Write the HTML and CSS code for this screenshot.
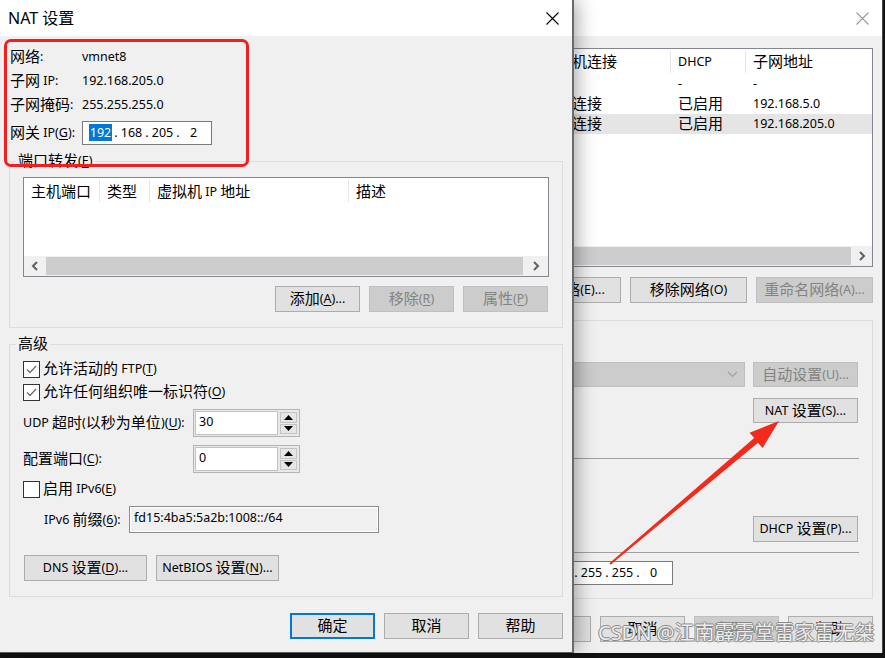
FILE: index.html
```html
<!DOCTYPE html>
<html lang="zh-CN">
<head>
  <meta charset="UTF-8">
  <meta name="viewport" content="width=device-width, initial-scale=1.0">
  <title>NAT 设置</title>
  <link rel="stylesheet" href="styles.css">
</head>
<body>

<div class="desktop">

  <!-- Virtual network editor (behind the dialog) -->
  <div class="window editor">
    <div class="titlebar">
      <span class="title">虚拟网络编辑器</span>
      <svg class="close inactive" width="13" height="13" viewBox="0 0 13 13"><path d="M0.5 0.5L12.5 12.5M12.5 0.5L0.5 12.5"/></svg>
    </div>

    <div class="editor-body">
      <div class="listview net-list">
        <div class="lv-row lv-head">
          <span><span class="cn">名称</span></span>
          <span><span class="cn">类型</span></span>
          <span><span class="cn">外部连接</span></span>
          <span><span class="cn">主机连接</span></span>
          <span>DHCP</span>
          <span><span class="cn">子网地址</span></span>
        </div>
        <div class="lv-row">
          <span>VMnet0</span>
          <span><span class="cn">桥接模式</span></span>
          <span><span class="cn">自动桥接</span></span>
          <span>-</span>
          <span>-</span>
          <span>-</span>
        </div>
        <div class="lv-row">
          <span>VMnet1</span>
          <span><span class="cn">仅主机</span></span>
          <span>-</span>
          <span><span class="cn">已连接</span></span>
          <span><span class="cn">已启用</span></span>
          <span>192.168.5.0</span>
        </div>
        <div class="lv-row selected">
          <span>VMnet8</span>
          <span>NAT <span class="cn">模式</span></span>
          <span>NAT <span class="cn">模式</span></span>
          <span><span class="cn">已连接</span></span>
          <span><span class="cn">已启用</span></span>
          <span>192.168.205.0</span>
        </div>
        <div class="lv-fill"></div>
        <div class="hscroll editor-scroll">
          <span class="thumb"></span>
          <span class="sb-btn">
            <svg width="8" height="10" viewBox="0 0 8 10"><path d="M2 1L6 5L2 9"/></svg>
          </span>
        </div>
      </div>

      <div class="btn-row list-btns">
        <button class="btn wide"><span class="cn">添加网络</span>(E)...</button>
        <button class="btn wide"><span class="cn">移除网络</span>(O)</button>
        <button class="btn wide" disabled><span class="cn">重命名网络</span>(A)...</button>
      </div>

      <div class="info-box">
        <div class="info-row row-a">
          <div class="combo">
            <svg width="11" height="7" viewBox="0 0 11 7"><path d="M1 1L5.5 5.5L10 1"/></svg>
          </div>
          <button class="btn side" disabled><span class="cn">自动设置</span>(U)...</button>
        </div>
        <div class="info-row row-b">
          <button class="btn side">NAT <span class="cn">设置</span>(S)...</button>
        </div>
        <div class="sep sep-1"></div>
        <div class="info-row row-c">
          <button class="btn side tall">DHCP <span class="cn">设置</span>(P)...</button>
        </div>
        <div class="sep sep-2"></div>
        <div class="info-row row-d">
          <div class="ipbox mask-box">
            <span class="oct">255</span><span class="dot">.</span><span class="oct">255</span><span class="dot">.</span><span class="oct">255</span><span class="dot">.</span><span class="oct">0</span>
          </div>
        </div>
      </div>

      <div class="btn-row editor-footer">
        <button class="btn"><span class="cn">确定</span></button>
        <button class="btn"><span class="cn">取消</span></button>
        <button class="btn" disabled><span class="cn">应用</span>(A)</button>
        <button class="btn"><span class="cn">帮助</span></button>
      </div>
    </div>
  </div>

  <!-- NAT settings dialog -->
  <div class="window dialog">
    <div class="titlebar">
      <span class="title">NAT 设置</span>
      <svg class="close" width="13" height="13" viewBox="0 0 13 13"><path d="M0.5 0.5L12.5 12.5M12.5 0.5L0.5 12.5"/></svg>
    </div>

    <div class="dialog-body">
      <div class="net-info">
        <span><span class="cn">网络</span>:</span>
        <span>vmnet8</span>
        <span><span class="cn">子网</span> IP:</span>
        <span>192.168.205.0</span>
        <span><span class="cn">子网掩码</span>:</span>
        <span>255.255.255.0</span>
        <span class="gw"><span class="cn">网关</span> IP(<u>G</u>):</span>
        <div class="ipbox gw">
          <span class="oct"><span class="sel">192</span></span><span class="dot">.</span><span class="oct">168</span><span class="dot">.</span><span class="oct">205</span><span class="dot">.</span><span class="oct">2</span>
        </div>
      </div>

      <fieldset class="group">
        <legend><span class="cn">端口转发</span>(<u>E</u>)</legend>
        <div class="group-inner">
          <div class="listview port-list">
            <div class="lv-row lv-head">
              <span><span class="cn">主机端口</span></span>
              <span><span class="cn">类型</span></span>
              <span><span class="cn">虚拟机</span> IP <span class="cn">地址</span></span>
              <span><span class="cn">描述</span></span>
            </div>
            <div class="lv-fill"></div>
            <div class="hscroll port-scroll">
              <span class="sb-btn">
                <svg width="8" height="10" viewBox="0 0 8 10"><path d="M6 1L2 5L6 9"/></svg>
              </span>
              <span class="thumb"></span>
              <span class="sb-btn">
                <svg width="8" height="10" viewBox="0 0 8 10"><path d="M2 1L6 5L2 9"/></svg>
              </span>
            </div>
          </div>
          <div class="btn-row port-btns">
            <button class="btn"><span class="cn">添加</span>(<u>A</u>)...</button>
            <button class="btn" disabled><span class="cn">移除</span>(<u>R</u>)</button>
            <button class="btn" disabled><span class="cn">属性</span>(<u>P</u>)</button>
          </div>
        </div>
      </fieldset>

      <fieldset class="group adv-group">
        <legend><span class="cn">高级</span></legend>
        <div class="group-inner">
          <label class="check-row">
            <span class="checkbox"><svg width="15" height="15" viewBox="0 0 15 15"><path d="M3 7.5L6 10.5L12 4"/></svg></span>
            <span><span class="cn">允许活动的</span> FTP(<u>T</u>)</span>
          </label>
          <label class="check-row cb-2">
            <span class="checkbox"><svg width="15" height="15" viewBox="0 0 15 15"><path d="M3 7.5L6 10.5L12 4"/></svg></span>
            <span><span class="cn">允许任何组织唯一标识符</span>(<u>O</u>)</span>
          </label>

          <div class="spin-row">
            <span class="field-label">UDP <span class="cn">超时</span>(<span class="cn">以秒为单位</span>)(<u>U</u>):</span>
            <div class="spin">
              <span class="spin-val">30</span>
              <span class="spin-btns">
                <span class="spin-btn"><svg width="9" height="5" viewBox="0 0 9 5"><path d="M0 5L4.5 0L9 5Z"/></svg></span>
                <span class="spin-btn"><svg width="9" height="5" viewBox="0 0 9 5"><path d="M0 0L4.5 5L9 0Z"/></svg></span>
              </span>
            </div>
          </div>
          <div class="spin-row">
            <span class="field-label"><span class="cn">配置端口</span>(<u>C</u>):</span>
            <div class="spin">
              <span class="spin-val">0</span>
              <span class="spin-btns">
                <span class="spin-btn"><svg width="9" height="5" viewBox="0 0 9 5"><path d="M0 5L4.5 0L9 5Z"/></svg></span>
                <span class="spin-btn"><svg width="9" height="5" viewBox="0 0 9 5"><path d="M0 0L4.5 5L9 0Z"/></svg></span>
              </span>
            </div>
          </div>

          <label class="check-row cb-3">
            <span class="checkbox"></span>
            <span><span class="cn">启用</span> IPv6(<u>E</u>)</span>
          </label>

          <div class="prefix-row">
            <span class="prefix-label">IPv6 <span class="cn">前缀</span>(<u>6</u>):</span>
            <div class="ro-box">fd15:4ba5:5a2b:1008::/64</div>
          </div>

          <div class="btn-row adv-btns">
            <button class="btn wide-2">DNS <span class="cn">设置</span>(<u>D</u>)...</button>
            <button class="btn wide-2">NetBIOS <span class="cn">设置</span>(<u>N</u>)...</button>
          </div>
        </div>
      </fieldset>

      <div class="btn-row dialog-footer">
        <button class="btn default"><span class="cn">确定</span></button>
        <button class="btn"><span class="cn">取消</span></button>
        <button class="btn"><span class="cn">帮助</span></button>
      </div>
    </div>
  </div>

  <!-- annotations drawn on top of the screenshot -->
  <div class="mark-box"></div>

  <svg class="arrow" width="885" height="658" viewBox="0 0 885 658">
    <polygon points="609.4,563.2 754.2,438.1 749.6,432.8 779,421 762.6,448 758,442.7 610.6,564.8"/>
  </svg>

  <div class="watermark">CSDN @江南霹雳堂雷家雷无桀</div>

</div>

</body>
</html>
```

FILE: styles.css
```css
/* Global */
* {
  box-sizing: border-box;
}

body {
  margin: 0;
  background-color: #111;
  color: #000;
  font-family: "Noto Sans", "Noto Sans CJK SC", sans-serif;
  font-size: 12.5px;
  line-height: 20px;
}

.cn {
  font-family: "Noto Sans CJK SC", sans-serif;
  font-size: 15px;
  line-height: 1;
  vertical-align: -1px;
}

u {
  text-decoration-thickness: 1px;
  text-underline-offset: 2px;
}

.desktop {
  position: relative;
  width: 885px;
  height: 658px;
  overflow: hidden;
}

/* Windows */
.window {
  position: absolute;
  top: 0;
  height: 653px;
  background-color: #f0f0f0;
}

.editor {
  left: 300px;
  width: 583px;
  border-right: 1px solid #4a4a4a;
}

.dialog {
  left: 0;
  width: 574px;
  border-right: 2px solid #6a6a6a;
  border-bottom: 1px solid #5a5a5a;
  box-shadow: 3px 0 18px rgba(0, 0, 0, 0.35);
}

.titlebar {
  height: 36px;
  background-color: #fff;
  display: flex;
  align-items: center;
  justify-content: space-between;
  padding: 0 13px 0 8px;
}

.title {
  font-size: 16px;
  font-family: "Noto Sans", "Noto Sans CJK SC", sans-serif;
}

.close path {
  stroke: #000;
  stroke-width: 1.1;
  fill: none;
}

.close.inactive path {
  stroke: #9a9a9a;
}

/* Buttons */
.btn-row {
  display: flex;
  gap: 9px;
}

.btn {
  width: 85px;
  height: 26px;
  padding: 0;
  border: 1px solid #adadad;
  background-color: #e1e1e1;
  color: #000;
  font: inherit;
  line-height: 22px;
  white-space: nowrap;
}

.btn:disabled {
  background-color: #cccccc;
  border-color: #bfbfbf;
  color: #838383;
}

.btn.default {
  border: 2px solid #0078d7;
}

.btn.wide {
  width: 117px;
}

.btn.wide-2 {
  width: 123px;
}

.btn.side {
  width: 105px;
  height: 25px;
}

.btn.side.tall {
  height: 26px;
}

/* List views */
.listview {
  display: flex;
  flex-direction: column;
  background-color: #fff;
  border: 1px solid #828790;
  overflow: hidden;
}

.lv-row {
  display: grid;
  height: 20px;
  align-items: center;
  white-space: nowrap;
}

.lv-row > span {
  padding-left: 7px;
}

.lv-head {
  height: 26px;
}

.lv-head > span {
  height: 22px;
  border-right: 1px solid #e5e5e5;
  line-height: 22px;
}

.lv-head > span:last-child {
  border-right: none;
}

.lv-fill {
  flex: 1;
}

.hscroll {
  display: grid;
  height: 20px;
  background-color: #f0f0f0;
}

.hscroll .thumb {
  background-color: #cdcdcd;
  margin: 1px 0;
}

.sb-btn {
  display: flex;
  align-items: center;
  justify-content: center;
}

.sb-btn path {
  fill: none;
  stroke: #606060;
  stroke-width: 2;
}

/* Editor window contents */
.editor-body {
  padding: 12px 9px 0 10px;
}

.net-list {
  height: 219px;
}

.net-list .lv-row {
  grid-template-columns: 60px 72px 107px 121px 75px 1fr;
}

.net-list .lv-head {
  height: 25px;
}

.net-list .lv-row.selected {
  background-color: #e5e5e5;
}

.editor-scroll {
  grid-template-columns: 1fr 21px;
}

.list-btns {
  margin-top: 10px;
  justify-content: flex-end;
}

.info-box {
  margin-top: 17px;
  height: 279px;
  border: 1px solid #dcdcdc;
  padding: 0 14px 0 12px;
}

.info-row {
  display: flex;
  justify-content: flex-end;
  gap: 8px;
}

.row-a {
  margin-top: 41px;
}

.row-b {
  margin-top: 11px;
}

.row-c {
  margin-top: 57px;
}

.row-d {
  margin-top: 8px;
}

.combo {
  width: 300px;
  height: 25px;
  background-color: #cccccc;
  border: 1px solid #bfbfbf;
  display: flex;
  align-items: center;
  justify-content: flex-end;
  padding-right: 6px;
}

.combo path {
  fill: none;
  stroke: #a2a2a2;
  stroke-width: 1.2;
}

.sep {
  height: 1px;
  margin-right: -1px;
  background-color: #a0a0a0;
}

.sep-1 {
  margin-top: 35px;
}

.sep-2 {
  margin-top: 10px;
}

.editor-footer {
  margin-top: 17px;
  justify-content: flex-end;
}

/* IP address control */
.ipbox {
  display: flex;
  align-items: center;
  width: 130px;
  height: 24px;
  padding: 0 5px;
  border: 1px solid #7a7a7a;
  background-color: #fff;
}

.ipbox .oct {
  width: 25px;
  text-align: center;
}

.ipbox .dot {
  width: 6px;
  text-align: center;
}

.ipbox .sel {
  background-color: #0078d7;
  color: #fff;
  padding: 0 1px;
}

.mask-box {
  width: 131px;
  margin-right: 185px;
}

/* Dialog contents */
.dialog-body {
  padding: 9px 9px 0 9px;
}

.net-info {
  display: grid;
  grid-template-columns: 72px auto;
  grid-template-rows: 24px 24px 24px 28px;
  align-items: center;
  justify-items: start;
  padding-left: 1px;
}

.net-info .gw {
  margin-top: 4px;
}

.group {
  margin: 6px 0 0;
  padding: 6px 0 15px;
  border: 1px solid #dcdcdc;
  min-width: 0;
}

.group legend {
  margin-left: 6px;
  padding: 0 2px;
  line-height: 20px;
}

.group-inner {
  padding: 0 13px;
}

.port-list {
  height: 100px;
}

.port-list .lv-row {
  grid-template-columns: 76px 50px 199px 1fr;
}

.port-list .lv-head > span {
  padding-top: 1px;
}

.port-scroll {
  grid-template-columns: 22px 1fr 25px;
}

.port-btns {
  margin-top: 9px;
  justify-content: flex-end;
  padding-right: 1px;
}

/* Advanced group */
.check-row {
  display: flex;
  align-items: center;
  gap: 3px;
  height: 18px;
}

.cb-2 {
  margin-top: 5px;
}

.cb-3 {
  margin-top: 7px;
}

.checkbox {
  width: 17px;
  height: 17px;
  border: 1px solid #333;
  background-color: #fff;
  display: flex;
  align-items: center;
  justify-content: center;
}

.checkbox path {
  fill: none;
  stroke: #707070;
  stroke-width: 1.3;
}

.spin-row {
  display: flex;
  align-items: center;
  height: 28px;
  margin-top: 8px;
}

.field-label {
  width: 170px;
  white-space: nowrap;
}

.spin {
  display: flex;
  width: 107px;
  height: 28px;
  border: 1px solid #b4b4b4;
  background-color: #e9e9e9;
  padding: 1px;
}

.spin-val {
  flex: 1;
  background-color: #fff;
  border: 1px solid #c2c2c2;
  padding-left: 3px;
  line-height: 20px;
}

.spin-btns {
  width: 20px;
  display: flex;
  flex-direction: column;
  gap: 1px;
  padding: 1px 1px 1px 2px;
}

.spin-btn {
  flex: 1;
  display: flex;
  align-items: center;
  justify-content: center;
  background-color: #e6e6e6;
  border: 1px solid #c4c4c4;
}

.spin-btn path {
  fill: #000;
}

.prefix-row {
  display: flex;
  align-items: center;
  height: 27px;
  margin-top: 8px;
  padding-left: 21px;
}

.prefix-label {
  width: 85px;
  white-space: nowrap;
}

.ro-box {
  width: 250px;
  height: 27px;
  border: 1px solid #8c8c8c;
  box-shadow: inset 0 0 0 1px #fff;
  background-color: #f0f0f0;
  padding: 1px 4px;
}

.adv-btns {
  margin-top: 22px;
  padding-left: 1px;
}

.dialog-footer {
  margin-top: 16px;
  justify-content: flex-end;
}

/* Annotations */
.mark-box {
  position: absolute;
  left: 4px;
  top: 39px;
  width: 245px;
  height: 128px;
  border: 3px solid #f41e1e;
  border-radius: 7px;
}

.arrow {
  position: absolute;
  left: 0;
  top: 0;
  pointer-events: none;
}

.arrow polygon {
  fill: #f22a1c;
}

.watermark {
  position: absolute;
  left: 598px;
  top: 620px;
  font-family: "Noto Sans", "Noto Sans CJK SC", sans-serif;
  font-size: 20px;
  line-height: 26px;
  color: rgba(255, 255, 255, 0.85);
  text-shadow: 1px 0 #8a8a8a, -1px 0 #8a8a8a, 0 1px #8a8a8a, 0 -1px #8a8a8a;
  white-space: nowrap;
}
```
